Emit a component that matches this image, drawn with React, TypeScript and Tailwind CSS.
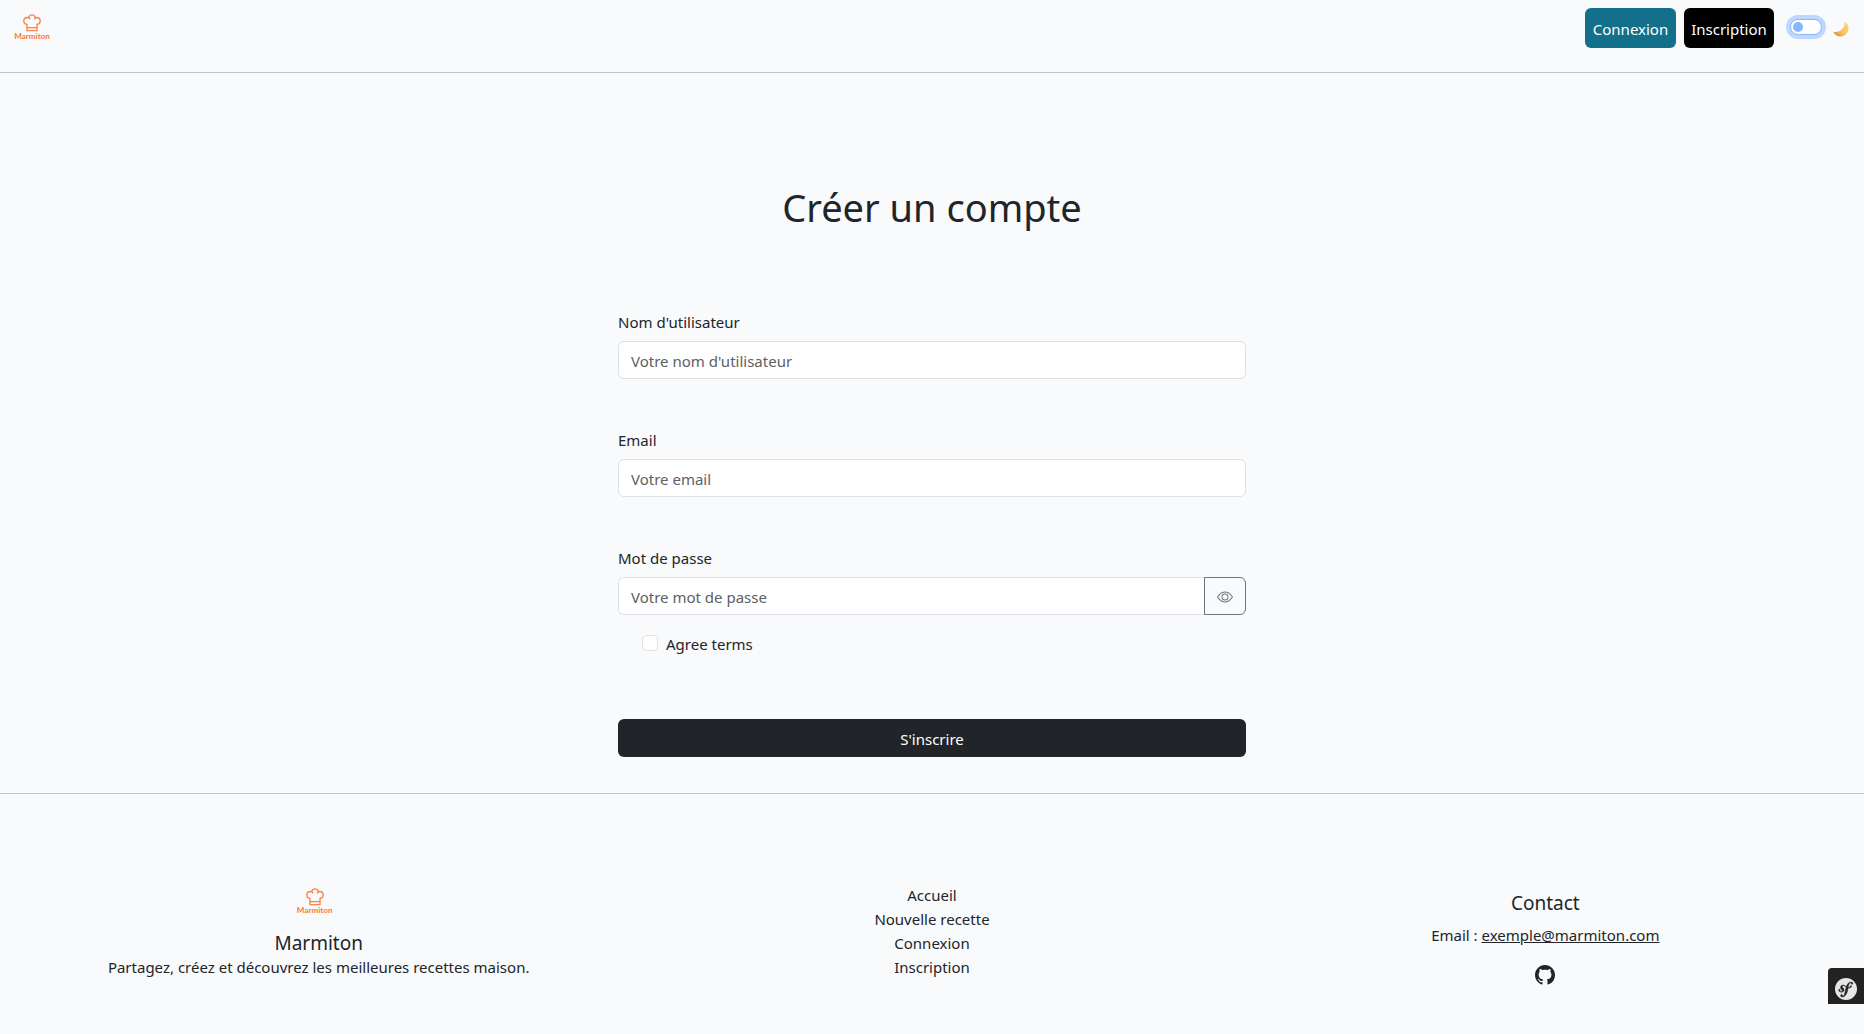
import { useState } from "react";
import type { ReactNode } from "react";

function Logo() {
  return (
    <span className="flex w-10 flex-col items-center text-[#fb8246]">
      <svg width="18" height="18" viewBox="0 0 18 18" fill="none" stroke="currentColor" strokeWidth="1.3" strokeLinejoin="round" strokeLinecap="round" aria-hidden="true">
        <path d="M4 10.400C2 10.200.8 8.700.8 7c0-2 1.600-3.500 3.600-3.500.5 0 .9.100 1.200.2C6.200 2 7.400.9 9 .9s2.800 1.100 3.400 2.800c.3-.1.700-.2 1.200-.2 2 0 3.600 1.500 3.600 3.500 0 1.700-1.200 3.200-3.200 3.400v6.300H4z" />
        <path d="M4 13.600h10M5.600 3.700c.7.300 1.100.700 1.300 1.200M12.400 3.700c-.2.600-.5 1-.9 1.300" />
      </svg>
      <span className="font-[Lato,sans-serif] text-[8px] leading-2 font-black">Marmiton</span>
    </span>
  );
}

function Moon() {
  return (
    <svg width="16" height="16" viewBox="0 0 16 16" aria-hidden="true">
      <defs>
        <linearGradient id="moon" x1="1" y1="0.2" x2="0.2" y2="1">
          <stop offset="0" stopColor="#ffd56b" />
          <stop offset="0.6" stopColor="#f9c15f" />
          <stop offset="1" stopColor="#d98e55" />
        </linearGradient>
      </defs>
      <path d="M11.300.4c2.600 1.300 4.200 3.800 4.200 6.800 0 4.500-3.500 8.200-8 8.200-3.200 0-5.900-1.700-7.200-4.700 1 .3 2 .4 3.100.2 4.600-.6 8-4 8.200-8.100 0-.9-.1-1.600-.3-2.400z" fill="url(#moon)" />
    </svg>
  );
}

function Field({ id, label, children }: { id: string; label: string; children: ReactNode }) {
  return (
    <div>
      <label htmlFor={id} className="block pt-px pb-[7px]">{label}</label>
      {children}
    </div>
  );
}

const inputClass =
  "h-[38px] min-w-0 border border-[#dee2e6] bg-white px-3 pt-0.5 placeholder:text-[#5d6064] outline-none";

export default function App() {
  const [visible, setVisible] = useState(false);
  return (
    <div className="flex min-h-screen flex-col bg-[#f8fafc] font-['Noto_Sans','Segoe_UI',sans-serif] text-[15px] leading-6 text-[#212529]">
      <header className="flex h-[73px] items-start justify-between border-b border-[#c2c3c7] px-3 pt-2">
        <a href="#" className="mt-1.5">
          <Logo />
        </a>
        <div className="flex">
          <a href="#" className="flex h-10 w-[91px] items-center justify-center rounded-md bg-[#13708a] pt-0.5 text-white">Connexion</a>
          <a href="#" className="ml-2 flex h-10 w-[90px] items-center justify-center rounded-md bg-black pt-0.5 text-white">Inscription</a>
          <label className="ml-4 flex items-start gap-[11px] pt-[11px] pr-[3px]">
            <input type="checkbox" role="switch" aria-label="Mode sombre" className="peer sr-only" />
            <span className="flex h-4 w-8 items-center rounded-full border border-[#86b7fe] bg-white px-0.5 ring-4 ring-[#bfd6fd] peer-checked:justify-end">
              <span className="size-2.5 rounded-full bg-[#86b7fe]" />
            </span>
            <span className="pt-0.5"><Moon /></span>
          </label>
        </div>
      </header>

      <main className="mx-auto w-full max-w-[628px] pb-9">
        <h1 className="pt-[110px] text-center text-[38px] leading-12">Créer un compte</h1>
        <form className="pt-[78px]">
          <div className="flex flex-col gap-12">
            <Field id="username" label="Nom d'utilisateur">
              <input id="username" type="text" placeholder="Votre nom d'utilisateur" className={inputClass + " w-full rounded-md"} />
            </Field>
            <Field id="email" label="Email">
              <input id="email" type="email" placeholder="Votre email" className={inputClass + " w-full rounded-md"} />
            </Field>
            <Field id="password" label="Mot de passe">
              <div className="flex">
                <input id="password" type={visible ? "text" : "password"} placeholder="Votre mot de passe" className={inputClass + " grow rounded-l-md border-r-0"} />
                <button type="button" aria-label="Afficher le mot de passe" onClick={() => setVisible(!visible)} className="flex w-[42px] items-center justify-center rounded-r-md border border-[#6c757d] pt-0.5 text-[#6c757d]">
                  <svg width="16" height="16" viewBox="0 0 16 16" fill="currentColor" aria-hidden="true">
                    <path d="M16 8s-3-5.500-8-5.500S0 8 0 8s3 5.500 8 5.500S16 8 16 8M1.173 8a13 13 0 0 1 1.660-2.043C4.120 4.668 5.880 3.500 8 3.500s3.879 1.168 5.168 2.457A13 13 0 0 1 14.828 8q-.086.130-.195.288c-.335.480-.830 1.120-1.465 1.755C11.879 11.332 10.119 12.500 8 12.500s-3.879-1.168-5.168-2.457A13 13 0 0 1 1.172 8z" />
                    <path d="M8 5.500a2.500 2.500 0 1 0 0 5 2.500 2.500 0 0 0 0-5M4.500 8a3.500 3.500 0 1 1 7 0 3.500 3.500 0 0 1-7 0" />
                  </svg>
                </button>
              </div>
            </Field>
          </div>
          <label className="mt-4 flex w-fit gap-2 pl-6">
            <input type="checkbox" className="mt-1 size-4 appearance-none rounded border border-[#dee2e6] bg-white checked:bg-blue-600" />
            <span className="pt-px">Agree terms</span>
          </label>
          <button type="submit" className="mt-[63px] block h-[38px] w-full rounded-md bg-[#212529] pt-0.5 text-white">S'inscrire</button>
        </form>
      </main>

      <footer className="grid grow grid-cols-3 border-t border-[#c2c3c7] px-3 pt-[89px] text-center">
        <div>
          <div className="flex justify-center pt-[5px] pr-2">
            <Logo />
          </div>
          <h5 className="mt-[18px] text-[19px] leading-[23px]">Marmiton</h5>
          <p>Partagez, créez et découvrez les meilleures recettes maison.</p>
        </div>
        <nav className="flex flex-col items-center">
          <a href="#">Accueil</a>
          <a href="#">Nouvelle recette</a>
          <a href="#">Connexion</a>
          <a href="#">Inscription</a>
        </nav>
        <div className="flex flex-col items-center pt-[9px]">
          <h5 className="mb-2 text-[19px] leading-[23px]">Contact</h5>
          <p>Email : <a href="#" className="underline">exemple@marmiton.com</a></p>
          <a href="#" aria-label="GitHub" className="mt-[18px]">
            <svg width="20" height="20" viewBox="0 0 16 16" fill="currentColor" aria-hidden="true">
              <path d="M8 0C3.580 0 0 3.580 0 8c0 3.540 2.290 6.530 5.470 7.590.4.070.550-.170.550-.380 0-.190-.010-.820-.010-1.490-2.010.370-2.530-.490-2.690-.940-.090-.230-.480-.940-.820-1.130-.280-.150-.680-.520-.010-.530.630-.010 1.080.580 1.230.820.720 1.210 1.870.870 2.330.660.070-.520.280-.870.510-1.070-1.780-.200-3.640-.890-3.640-3.950 0-.870.310-1.590.820-2.150-.080-.200-.360-1.020.080-2.120 0 0 .670-.210 2.200.820.640-.180 1.320-.270 2-.270s1.360.090 2 .270c1.530-1.040 2.200-.820 2.200-.820.440 1.100.160 1.920.080 2.120.510.560.820 1.270.820 2.150 0 3.070-1.870 3.750-3.650 3.950.290.250.540.730.540 1.480 0 1.070-.010 1.930-.010 2.200 0 .210.150.460.550.380A8.010 8.010 0 0 0 16 8c0-4.420-3.580-8-8-8" />
            </svg>
          </a>
        </div>
      </footer>

      <button type="button" aria-label="Symfony" className="fixed right-0 bottom-[30px] flex size-9 items-end justify-center rounded-tl bg-[#222] pb-1">
        <SymfonyMark />
      </button>
    </div>
  );
}

function SymfonyMark() {
  return (
    <svg width="22" height="22" viewBox="0 0 24 24" aria-hidden="true">
      <circle cx="12" cy="12" r="12" fill="#e6e6e6" />
      <path fill="#222" stroke="#222" strokeWidth="0.500" d="M17.247 4.439c-1.220.042-2.283.715-3.075 1.644-.878 1.020-1.461 2.229-1.881 3.461-.753-.614-1.332-1.414-2.539-1.761-.966-.297-2.015-.105-2.813.514-.410.319-.710.757-.861 1.254-.360 1.176.381 2.225.719 2.600l.737.790c.150.154.519.560.339 1.138-.193.631-.951 1.037-1.732.799-.348-.106-.848-.366-.734-.730.045-.150.152-.263.210-.391.052-.110.077-.194.095-.242.141-.465-.053-1.070-.551-1.223-.465-.143-.939-.030-1.125.566-.209.680.117 1.913 1.860 2.449 2.040.628 3.765-.484 4.009-1.932.153-.907-.255-1.582-1.006-2.447l-.612-.677c-.371-.370-.497-1.002-.114-1.485.324-.409.785-.584 1.539-.379 1.103.300 1.594 1.063 2.412 1.680-.338 1.110-.560 2.223-.759 3.222l-.123.746c-.585 3.070-1.033 4.757-2.194 5.726-.234.166-.570.416-1.073.434-.266.005-.352-.176-.355-.257-.006-.184.150-.270.255-.353.154-.083.389-.224.372-.674-.016-.532-.456-.994-1.094-.973-.477.017-1.203.465-1.176 1.286.028.850.819 1.485 2.012 1.444.638-.021 2.062-.281 3.464-1.949 1.633-1.911 2.090-4.101 2.434-5.706l.383-2.116c.213.024.441.042.690.048 2.032.044 3.049-1.010 3.064-1.776.010-.464-.304-.921-.744-.910-.386.009-.718.278-.806.654-.094.428.646.813.068 1.189-.410.266-1.146.452-2.184.300l.188-1.042c.386-1.976.859-4.407 2.661-4.467.132-.007.612.006.623.323.003.105-.022.134-.147.375-.115.155-.174.345-.168.537.017.504.400.836.957.816.743-.023.955-.748.945-1.119-.032-.874-.952-1.424-2.170-1.386z" />
    </svg>
  );
}
